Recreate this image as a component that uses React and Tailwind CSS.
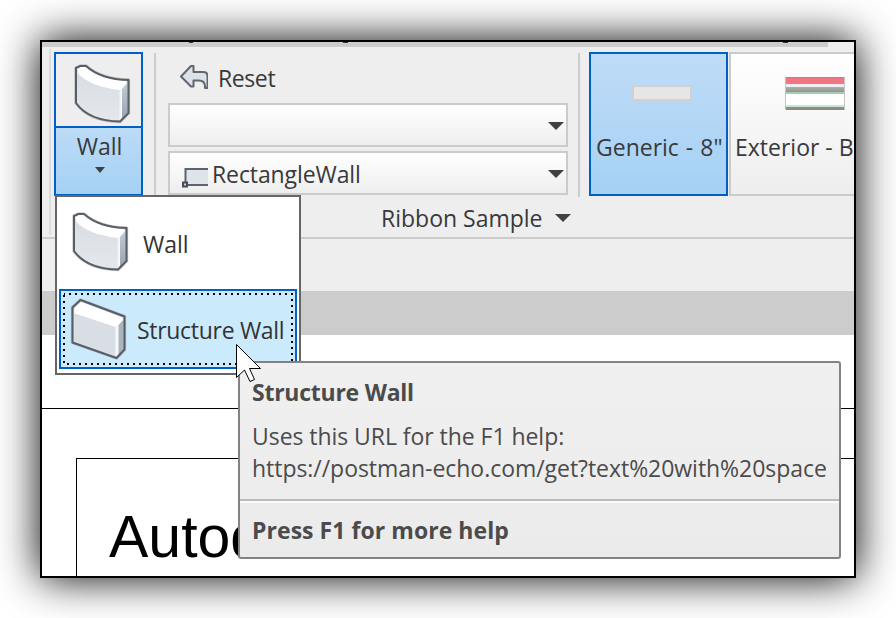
const sans = "font-['Open_Sans','Noto_Sans',sans-serif]";

function Label({ className = "", children }) {
  return <span className={`block whitespace-nowrap ${className}`}>{children}</span>;
}

function Caret({ className = "" }) {
  return (
    <svg className={`shrink-0 ${className}`} width="16" height="8" viewBox="0 0 16 8">
      <path d="M0 0H16L8 8Z" fill="#3f4042" />
    </svg>
  );
}

function CurvedWall() {
  return (
    <svg width="60" height="64" viewBox="0 0 60 64" className="block">
      <defs>
        <linearGradient id="cw-face" x1="0" y1="0" x2="0" y2="1">
          <stop offset="0" stopColor="#d9dde3" />
          <stop offset="1" stopColor="#e4e8ec" />
        </linearGradient>
        <linearGradient id="cw-side" x1="0" y1="0" x2="0" y2="1">
          <stop offset="0" stopColor="#c3ccd5" />
          <stop offset="1" stopColor="#98a4b1" />
        </linearGradient>
      </defs>
      <path d="M4 7L8.500 5H14Q29 18.500 56.500 19V52L48 60.500Q17 60 4 42Z" fill="#fff" stroke="#585e66" strokeOpacity=".3" strokeWidth="3.400" strokeLinejoin="round" />
      <path d="M4.500 11Q19 27 48 28V59.500Q18 59 4.500 42Z" fill="url(#cw-face)" />
      <path d="M4.500 8Q8 14 14 18Q28 27 48 29V26L56 19Q29 18.500 14 5H8.500Z" fill="#fff" />
      <path d="M50 28L56 21V51.500L50 58Z" fill="url(#cw-side)" />
      <path d="M48.500 28V59" stroke="#f1f4f6" strokeWidth="2" />
      <path d="M4 7L8.500 5H14Q29 18.500 56.500 19V52L48 60.500Q17 60 4 42Z" fill="none" stroke="#585e66" strokeWidth="2" strokeLinejoin="round" />
    </svg>
  );
}

function FlatWall() {
  return (
    <svg width="60" height="64" viewBox="0 0 60 64" className="block">
      <path d="M3.500 10.500L11.500 3L55.500 19.500V52.500L47.500 61L3.500 45.500Z" fill="#fff" stroke="#585e66" strokeOpacity=".3" strokeWidth="3.400" strokeLinejoin="round" />
      <path d="M4.500 16L46.500 30V60L4.500 45Z" fill="#d9dde4" />
      <path d="M49.500 28L55 22V52L49.500 58Z" fill="#a9b4bf" />
      <path d="M48 29V60" stroke="#f4f6f8" strokeWidth="2" />
      <path d="M3.500 10.500L11.500 3L55.500 19.500V52.500L47.500 61L3.500 45.500Z" fill="none" stroke="#585e66" strokeWidth="2" strokeLinejoin="round" />
    </svg>
  );
}

function ResetIcon() {
  return (
    <svg width="28" height="26" viewBox="0 0 28 26" className="block shrink-0">
      <path d="M1 12.500L11 2H13.500V8H23Q27.500 8 27.500 12V24H25V22Q24.500 16.500 19 16.500H13.500V22.500H11Z" fill="#dde1e8" stroke="#62676f" strokeWidth="2" strokeLinejoin="round" />
    </svg>
  );
}

function RectangleIcon() {
  return (
    <svg width="26" height="22" viewBox="0 0 26 22" className="block shrink-0">
      <rect x="3" y="2" width="26" height="16" fill="#dfe3ea" />
      <path d="M26 2H3.500V18H26" fill="none" stroke="#5c636c" strokeWidth="2" />
      <rect x="1" y="15.500" width="4" height="4" fill="#c9d0d9" stroke="#454d57" strokeWidth="2" />
    </svg>
  );
}

function Combo({ children }) {
  return (
    <div className="flex h-11 w-[400px] items-center justify-between border-2 border-[#cbcbcb] bg-linear-to-b from-white to-[#eeeeee] pr-[2px]">
      <div className="flex items-center">{children}</div>
      <Caret className="mt-[2px]" />
    </div>
  );
}

function Divider() {
  return <div className="mt-px h-36 w-0.5 shrink-0 bg-[#cbcbcb]" />;
}

function Ribbon() {
  return (
    <div className="flex h-[192px] shrink-0 flex-col border-b-2 border-[#cccccc] bg-[#eeeeee] text-[#38393b]">
      <div className="flex pt-[5px]">
        <div className="-mt-[3px] -mb-[45px] ml-[7px] h-[186px] w-0.5 shrink-0 bg-[#dcdcdc]" />
        <div className="ml-[3px] flex h-36 w-[89px] shrink-0 flex-col border-2 border-[#0060c8]">
          <div className="h-[72px] pt-[7px] pl-[16px]"><CurvedWall /></div>
          <div className="flex grow flex-col items-center border-t-2 border-[#0060c8] bg-linear-to-b from-[#bcdbf7] to-[#a5d1f4] pl-[2px]">
            <Label className="mt-[4px] text-[23px] leading-7">Wall</Label>
            <svg className="mt-[7px]" width="10" height="6" viewBox="0 0 10 6"><path d="M0 0H10L5 6Z" fill="#3f4042" /></svg>
          </div>
        </div>
        <div className="ml-[11px]"><Divider /></div>
        <div className="ml-3 flex flex-col">
          <div className="flex h-[51px] pt-3 pl-3">
            <ResetIcon />
            <Label className="ml-[10px] text-[23px] leading-7 tracking-[-0.4px]">Reset</Label>
          </div>
          <Combo />
          <div className="h-1" />
          <Combo>
            <div className="mt-[10px] ml-3"><RectangleIcon /></div>
            <Label className="mt-[2px] ml-1 text-[23px] leading-7 tracking-[-0.1px]">RectangleWall</Label>
          </Combo>
        </div>
        <div className="ml-[10px]"><Divider /></div>
        <div className="ml-[9px] h-36 w-[139px] shrink-0 border-2 border-[#0060c8] bg-linear-to-b from-[#bfdcf7] to-[#a5d1f4]">
          <div className="mt-[31px] ml-[41px] h-4 w-[60px] rounded-[1px] border-2 border-[#cfd1d3] bg-[#e6e6e6]" />
          <Label className="mt-[32px] ml-[5px] text-[23px] leading-7 [word-spacing:1px]">Generic - 8"</Label>
        </div>
        <div className="ml-px h-36 w-[160px] shrink-0 border-2 border-[#cbcbcb] bg-linear-to-b from-white to-[#eeeeee]">
          <div className="mt-[23px] ml-[54px] flex h-[33px] w-[60px] flex-col border-x border-[#c5c5c5]">
            <div className="h-[7px] border-t border-[#c08080] bg-[#f17582]" />
            <div className="h-[3px] bg-[#eeeeee]" />
            <div className="h-[5px] bg-linear-to-b from-[#b0b0b0] to-[#8f9590]" />
            <div className="h-[2px] bg-[#a6cdb0]" />
            <div className="h-[11px] bg-white" />
            <div className="h-[2px] bg-[#c8e8cd]" />
            <div className="h-[3px] bg-[#8c8c8c]" />
          </div>
          <Label className="mt-[23px] ml-[4px] text-[23px] leading-7">Exterior - Brick</Label>
        </div>
      </div>
      <div className="flex items-center pt-[7px] pl-[339px]">
        <Label className="w-[161px] text-[23px] leading-7">Ribbon Sample</Label>
        <Caret className="ml-[13px]" />
      </div>
    </div>
  );
}

function Menu() {
  return (
    <div className="absolute top-[153px] left-[13px] flex h-[180px] w-[246px] flex-col border-2 border-[#666666] bg-white p-0.5 text-[#333333]">
      <div className="flex h-[90px] pt-[10px] pl-[11px]">
        <CurvedWall />
        <Label className="mt-[21px] ml-[13px] text-[23px] leading-7">Wall</Label>
      </div>
      <div className="relative flex h-20 w-[238px] items-center border-2 border-[#0060c8] bg-[#cbebfd] pl-[8px]">
        <svg className="absolute top-0 left-0" width="234" height="76">
          <rect x="3" y="3" width="228" height="70" fill="none" stroke="#000" strokeWidth="2" strokeDasharray="2 4" strokeDashoffset="1" />
        </svg>
        <FlatWall />
        <Label className="mt-[2px] ml-[8px] text-[23px] leading-7 tracking-[-0.3px]">Structure Wall</Label>
      </div>
    </div>
  );
}

function Tooltip() {
  return (
    <div className="absolute top-[319px] left-[196px] flex h-[198px] w-[603px] flex-col rounded-[3px] border-2 border-[#838383] bg-linear-to-b from-[#f0f0f0] to-[#ebebeb] text-[#4b4b4b]">
      <div className="h-[136px] pt-[15px] pl-[12px]">
        <Label className="text-[23px] leading-7 font-bold tracking-[-0.25px]">Structure Wall</Label>
        <Label className="mt-[14px] text-[23px] leading-8 tracking-[-0.05px]">Uses this URL for the F1 help:</Label>
        <Label className="text-[23px] leading-8 tracking-[-0.04px]">https://postman-echo.com/get?text%20with%20space</Label>
      </div>
      <div className="h-0.5 bg-[#bbbbbb]" />
      <div className="h-0.5 bg-[#fafafa]" />
      <Label className="mt-[13px] ml-[12px] text-[23px] leading-7 font-bold tracking-[0.05px]">Press F1 for more help</Label>
    </div>
  );
}

function Cursor() {
  return (
    <svg className="absolute top-[302px] left-[194px]" width="27" height="40" viewBox="0 0 27 40">
      <path d="M.5 .5V33.500L8.500 26L14 37.500L18.500 35.500L13.500 24.500H24.500Z" fill="#fff" stroke="#000" />
    </svg>
  );
}

export default function App() {
  return (
    <div className={`h-[618px] w-[896px] overflow-hidden bg-white p-10 ${sans}`}>
      <div className="relative h-[538px] w-[816px] border-2 border-black shadow-[0_0_40px_#000]">
        <div className="flex h-[534px] w-[812px] flex-col overflow-hidden bg-white">
          <div className="flex h-[5px] shrink-0 bg-[#eeeeee]">
            <div className="flex w-[786px] bg-[#cccccc] pl-[147px]">
              <i className="h-px w-1 bg-[#333]" />
              <i className="ml-[150px] h-px w-[5px] bg-[#333]" />
              <i className="ml-[435px] h-px w-[5px] bg-[#333]" />
            </div>
          </div>
          <Ribbon />
          <div className="h-[52px] shrink-0 bg-[#eeeeee]" />
          <div className="h-11 shrink-0 bg-[#cccccc]" />
          <div className="h-[74px] shrink-0 border-b border-black" />
          <div className="mt-[49px] ml-[34px] h-[140px] shrink-0 border-t border-l border-black pt-[45px] pl-8 font-['Liberation_Sans',Arial,sans-serif] text-[59px] leading-[66px] text-black">
            Autodesk
          </div>
        </div>
        <Menu />
        <Tooltip />
        <Cursor />
      </div>
    </div>
  );
}
